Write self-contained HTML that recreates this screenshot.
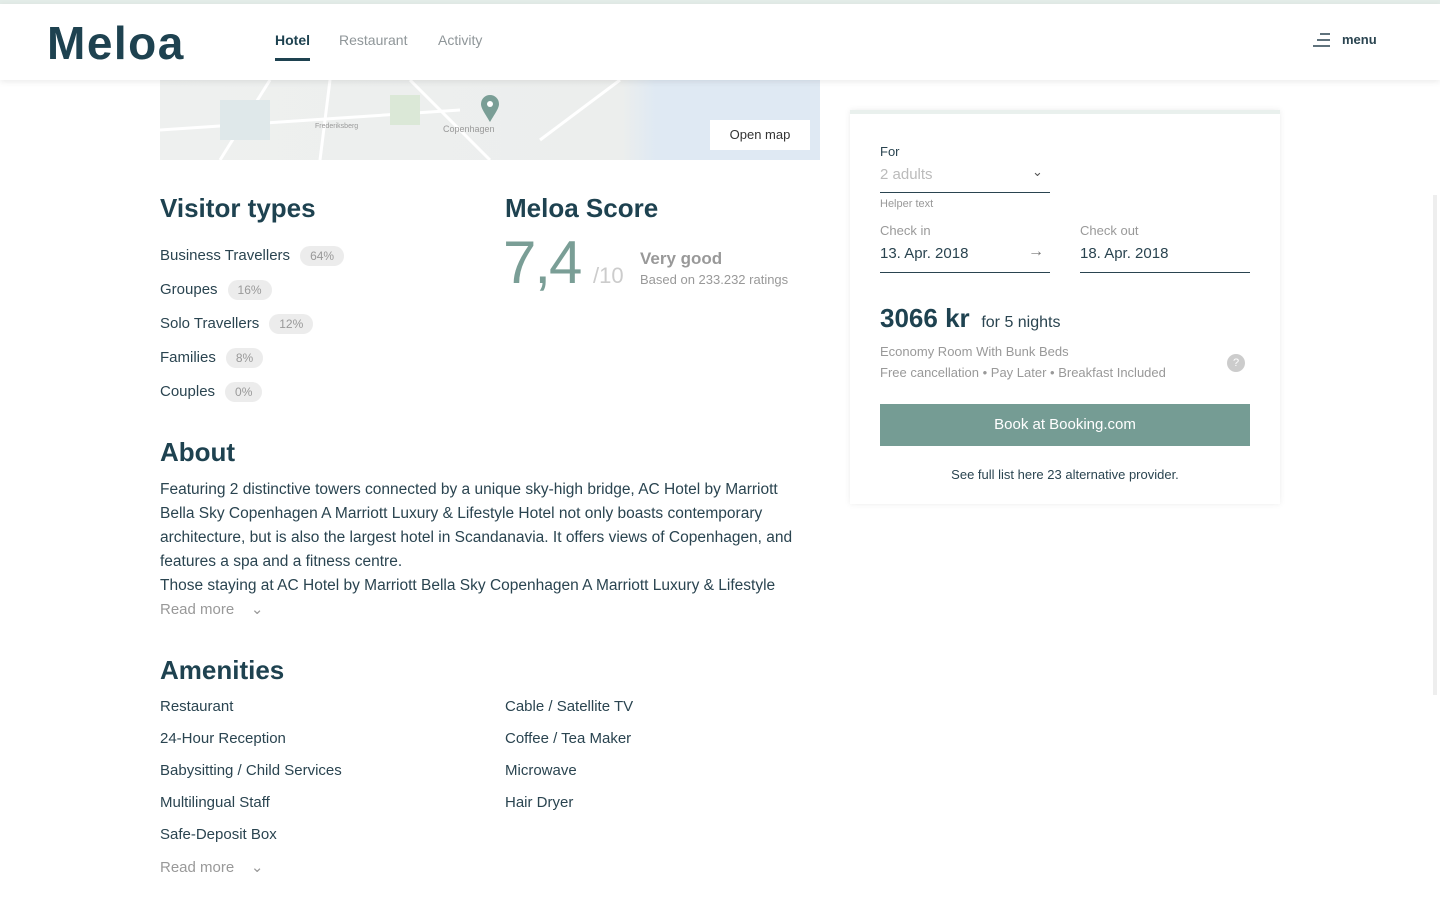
<!DOCTYPE html>
<html><head><meta charset="utf-8"><style>
*{box-sizing:border-box;margin:0;padding:0}
body{width:1440px;height:904px;overflow:hidden;background:#fff;font-family:"Liberation Sans",sans-serif;color:#2a4450;position:relative}
.top{position:absolute;left:0;top:0;width:1440px;height:4px;background:#e3ece8}
.hdr{position:absolute;left:0;top:4px;width:1440px;height:76px;background:#fff;box-shadow:0 2px 6px rgba(0,0,0,.08);z-index:2}
.logo{position:absolute;left:47px;top:12px;font-size:46px;font-weight:bold;color:#1e4250;letter-spacing:1.5px}
.nav{position:absolute;top:28px;font-size:14px;color:#8f9699}
.nav.a{color:#1e4250;font-weight:bold}
.nav.a:after{content:"";position:absolute;left:0;right:0;top:26px;height:3px;background:#1e4250}
.map{position:absolute;left:160px;top:80px;width:660px;height:80px;background:linear-gradient(90deg,#eef0ef 0,#eceeed 70%,#dfe9f3 75%,#dfe9f3 100%)}
.btn{position:absolute;left:710px;top:120px;width:100px;height:30px;background:#fff;font-size:13px;line-height:30px;text-align:center;color:#333}
h2{position:absolute;font-size:26px;color:#1e4250;font-weight:bold}
.t{position:absolute;font-size:15px;color:#2a4450}
.pill{display:inline-block;margin-left:10px;background:#ececec;color:#999;border-radius:11px;font-size:12px;padding:3px 10px}
.g{color:#999}
.about{position:absolute;left:160px;top:478px;width:680px;font-size:15.5px;line-height:24px;color:#2a4450;white-space:nowrap}
.card{position:absolute;left:850px;top:110px;width:430px;height:394px;background:#fff;box-shadow:0 0 6px rgba(0,0,0,.08);border-top:4px solid #e9f0ed}
.card .t{font-size:13px}
.line{position:absolute;height:1px;background:#2a4450}
.book{position:absolute;left:30px;top:290px;width:370px;height:42px;background:#759c94;color:#fff;font-size:15px;text-align:center;line-height:42px}
.ps{position:absolute;left:1433px;top:195px;width:4px;height:500px;background:#eee}
</style></head><body>
<div class="top"></div>
<div class="hdr">
<div class="logo">Meloa</div>
<div class="nav a" style="left:275px">Hotel</div>
<div class="nav" style="left:339px">Restaurant</div>
<div class="nav" style="left:438px">Activity</div>
<svg style="position:absolute;left:1312px;top:28px" width="20" height="16"><path d="M8 2h10M5 8h13M1 14h17" stroke="#2a4450" stroke-width="1.5"/></svg>
<div style="position:absolute;left:1342px;top:28px;font-size:13px;font-weight:bold;color:#2a4450">menu</div>
</div>
<div class="map">
<svg width="660" height="80" style="position:absolute;left:0;top:0"><path d="M60 80 L110 0 M0 50 L300 30 M250 0 L330 80 M170 0 L160 80 M380 60 L460 0" stroke="#fff" stroke-width="3" fill="none"/><rect x="60" y="20" width="50" height="40" fill="#dfe8ea"/><rect x="230" y="15" width="30" height="30" fill="#dbe8d7"/><path d="M330 42 C324 32 321 28 321 24 A9 9 0 0 1 339 24 C339 28 336 32 330 42Z" fill="#7a9e96"/><circle cx="330" cy="24" r="3" fill="#fff"/><text x="283" y="52" font-size="9" fill="#999" font-family="Liberation Sans">Copenhagen</text><text x="155" y="48" font-size="7" fill="#999" font-family="Liberation Sans">Frederiksberg</text></svg>
</div>
<div class="btn">Open map</div>

<h2 style="left:160px;top:193px">Visitor types</h2>
<div class="t" style="left:160px;top:246px">Business Travellers<span class="pill">64%</span></div>
<div class="t" style="left:160px;top:280px">Groupes<span class="pill">16%</span></div>
<div class="t" style="left:160px;top:314px">Solo Travellers<span class="pill">12%</span></div>
<div class="t" style="left:160px;top:348px">Families<span class="pill">8%</span></div>
<div class="t" style="left:160px;top:382px">Couples<span class="pill">0%</span></div>

<h2 style="left:505px;top:193px">Meloa Score</h2>
<div style="position:absolute;left:503px;top:228px;font-size:60px;color:#7a9e96;letter-spacing:-2px">7,4</div>
<div style="position:absolute;left:593px;top:263px;font-size:22px;color:#ccc">/10</div>
<div style="position:absolute;left:640px;top:249px;font-size:17px;color:#999;font-weight:bold">Very good</div>
<div style="position:absolute;left:640px;top:272px;font-size:13px;color:#999">Based on 233.232 ratings</div>

<h2 style="left:160px;top:437px">About</h2>
<div class="about">Featuring 2 distinctive towers connected by a unique sky-high bridge, AC Hotel by Marriott<br>Bella Sky Copenhagen A Marriott Luxury &amp; Lifestyle Hotel not only boasts contemporary<br>architecture, but is also the largest hotel in Scandanavia. It offers views of Copenhagen, and<br>features a spa and a fitness centre.<br>Those staying at AC Hotel by Marriott Bella Sky Copenhagen A Marriott Luxury &amp; Lifestyle</div>
<div class="t g" style="left:160px;top:600px">Read more &nbsp; &nbsp;⌄</div>

<h2 style="left:160px;top:655px">Amenities</h2>
<div class="t" style="left:160px;top:698px">Restaurant</div>
<div class="t" style="left:160px;top:730px">24-Hour Reception</div>
<div class="t" style="left:160px;top:762px">Babysitting / Child Services</div>
<div class="t" style="left:160px;top:794px">Multilingual Staff</div>
<div class="t" style="left:160px;top:826px">Safe-Deposit Box</div>
<div class="t g" style="left:160px;top:858px">Read more &nbsp; &nbsp;⌄</div>
<div class="t" style="left:505px;top:698px">Cable / Satellite TV</div>
<div class="t" style="left:505px;top:730px">Coffee / Tea Maker</div>
<div class="t" style="left:505px;top:762px">Microwave</div>
<div class="t" style="left:505px;top:794px">Hair Dryer</div>

<div class="card">
<div class="t" style="left:30px;top:30px">For</div>
<div class="t" style="left:30px;top:52px;font-size:15px;color:#bbb">2 adults</div>
<div class="t" style="left:182px;top:50px;color:#555">⌄</div>
<div class="line" style="left:30px;top:78px;width:170px"></div>
<div class="t" style="left:30px;top:84px;font-size:11px;color:#999">Helper text</div>
<div class="t" style="left:30px;top:109px;color:#999">Check in</div>
<div class="t" style="left:30px;top:131px;font-size:15px">13. Apr. 2018</div>
<div class="t" style="left:178px;top:129px;font-size:16px;color:#777">→</div>
<div class="line" style="left:30px;top:158px;width:170px"></div>
<div class="t" style="left:230px;top:109px;color:#999">Check out</div>
<div class="t" style="left:230px;top:131px;font-size:15px">18. Apr. 2018</div>
<div class="line" style="left:230px;top:158px;width:170px"></div>
<div class="t" style="left:30px;top:189px;font-size:26px;font-weight:bold;color:#1e4250">3066 kr <span style="font-size:16px;font-weight:normal;color:#2a4450">&nbsp;for 5 nights</span></div>
<div class="t" style="left:30px;top:230px;color:#999">Economy Room With Bunk Beds</div>
<div class="t" style="left:30px;top:251px;color:#999">Free cancellation • Pay Later • Breakfast Included</div>
<div style="position:absolute;left:377px;top:240px;width:18px;height:18px;border-radius:50%;background:#ccc;color:#fff;font-size:11px;text-align:center;line-height:18px">?</div>
<div class="book">Book at Booking.com</div>
<div class="t" style="left:0;width:430px;text-align:center;top:353px;color:#2a4450">See full list here 23 alternative provider.</div>
</div>
<div class="ps"></div>
</body></html>
